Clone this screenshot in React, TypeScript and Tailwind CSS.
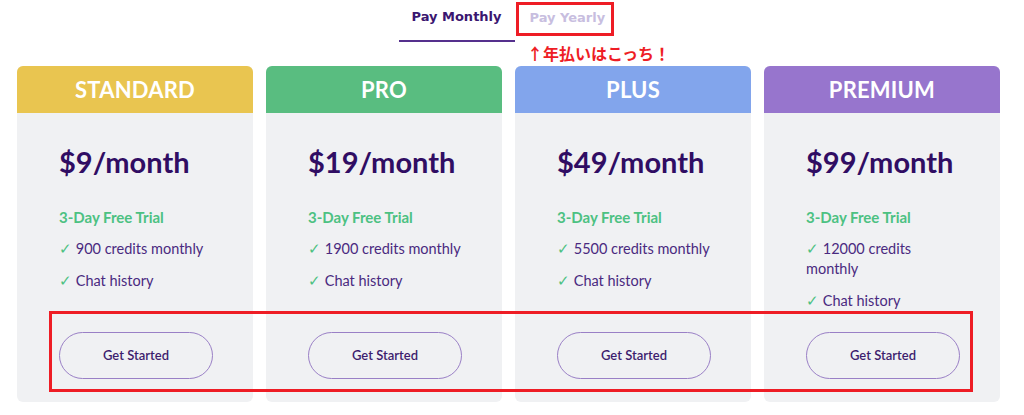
import React from "react";

const plans = [
  { name: "STANDARD", price: "$9/month", credits: "900 credits monthly", head: "bg-[#e9c550]" },
  { name: "PRO", price: "$19/month", credits: "1900 credits monthly", head: "bg-[#59bd80]" },
  { name: "PLUS", price: "$49/month", credits: "5500 credits monthly", head: "bg-[#82a5ec]" },
  { name: "PREMIUM", price: "$99/month", credits: "12000 credits monthly", head: "bg-[#9775cd]" },
];

function PlanCard({ plan }: { plan: (typeof plans)[number] }) {
  return (
    <div className="flex h-[336px] w-[236px] flex-col overflow-hidden rounded-md bg-[#f0f1f3]">
      <div className={`${plan.head} flex h-[47px] items-center justify-center`}>
        <span className="text-[22px] font-bold tracking-[0.2px] text-white">{plan.name}</span>
      </div>
      <div className="flex flex-1 flex-col pb-[23px] pl-[42px] pr-[40px] pt-[31px]">
        <div className="text-[29px] font-bold leading-[35px] text-[#300d63]">{plan.price}</div>
        <div className="mt-[28px] text-[15px] font-bold leading-5 text-[#4cc182]">3-Day Free Trial</div>
        <ul className="mt-3 flex flex-col gap-3 text-[14.5px] leading-5 text-[#4a2a80]">
          <li>
            <span className="text-[#4cc182]">✓</span> {plan.credits}
          </li>
          <li>
            <span className="text-[#4cc182]">✓</span> Chat history
          </li>
        </ul>
        <button className="mt-auto h-[47px] w-[154px] rounded-full border border-[#9a80c6] text-[13px] font-semibold text-[#3d1d6e]">
          Get Started
        </button>
      </div>
    </div>
  );
}

export default function App() {
  return (
    <div className="relative h-[415px] w-[1024px] overflow-hidden bg-white font-['Lato',sans-serif]">
      {/* billing tabs */}
      <div className="flex h-[66px] justify-center pr-[13px]">
        <div className="flex h-[42px] items-start">
          <button className="h-[42px] w-[116px] border-b-2 border-[#55308d] pb-[6px] font-['DejaVu_Sans',sans-serif] text-[13px] font-bold text-[#3a1670]">
            Pay Monthly
          </button>
          <button className="h-[42px] w-[98px] pb-[6px] pl-[15px] text-left font-['DejaVu_Sans',sans-serif] text-[13px] font-bold text-[#c8bedf]">
            Pay Yearly
          </button>
        </div>
      </div>

      <div className="flex gap-[13px] pl-[17px]">
        {plans.map((p) => (
          <PlanCard key={p.name} plan={p} />
        ))}
      </div>

      {/* red annotations over the screenshot */}
      <div className="absolute left-[516px] top-[2px] h-[34px] w-[98px] border-[3px] border-[#ee1d25]" />
      <div className="absolute left-[527px] top-[43px] font-['Noto_Sans_CJK_JP',sans-serif] text-[16px] font-bold leading-5 text-[#ee1d25]">
        ↑年払いはこっち！
      </div>
      <div className="absolute left-[49px] top-[311px] h-[81px] w-[924px] border-[3px] border-[#ee1d25]" />
    </div>
  );
}
